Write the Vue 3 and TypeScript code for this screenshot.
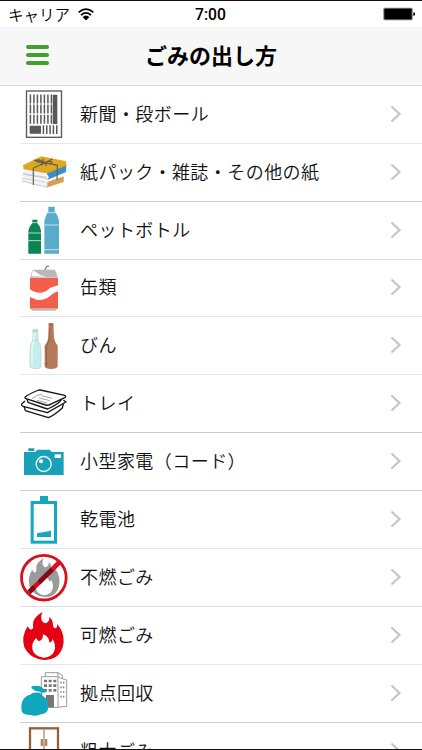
<script setup lang="ts">
interface Item {
  icon: string
  label: string
  tone: 'light' | 'mid' | 'dark'
  top: number
}

const items: Item[] = [
  { icon: 'newspaper', label: '新聞・段ボール', tone: 'light', top: 6 },
  { icon: 'books', label: '紙パック・雑誌・その他の紙', tone: 'dark', top: 180 },
  { icon: 'bottles', label: 'ペットボトル', tone: 'mid', top: 6 },
  { icon: 'can', label: '缶類', tone: 'light', top: 180 },
  { icon: 'glass', label: 'びん', tone: 'light', top: 6 },
  { icon: 'tray', label: 'トレイ', tone: 'dark', top: 180 },
  { icon: 'camera', label: '小型家電（コード）', tone: 'dark', top: 6 },
  { icon: 'battery', label: '乾電池', tone: 'light', top: 180 },
  { icon: 'noburn', label: '不燃ごみ', tone: 'mid', top: 6 },
  { icon: 'burn', label: '可燃ごみ', tone: 'light', top: 180 },
  { icon: 'depot', label: '拠点回収', tone: 'dark', top: 6 },
  { icon: 'wardrobe', label: '粗大ごみ', tone: 'light', top: 180 },
]
</script>

<template>
  <div class="screen">
    <header>
      <div class="status">
        <div class="carrier">
          <span>キャリア</span>
          <svg class="wifi" viewBox="0 0 48 38" width="16" height="12.7">
            <path d="M2 13Q24-6 46 13M9 21Q24 8 39 21" fill="none" stroke="#000" stroke-width="5" />
            <path d="M14 27Q24 18 34 27L24 38Z" />
          </svg>
        </div>
        <span class="time">7:00</span>
        <svg class="power" viewBox="0 0 96 42" width="32" height="14">
          <rect x="1" y="2" width="88" height="38" rx="5" fill="#777" />
          <rect x="4" y="5" width="82" height="32" rx="3" />
          <path d="M91 16Q97 17 97 21Q97 25 91 27Z" />
        </svg>
      </div>
      <div class="nav">
        <button class="menu" aria-label="メニュー"><i></i><i></i><i></i></button>
        <h1>ごみの出し方</h1>
      </div>
    </header>
    <ul>
      <li v-for="item in items" :key="item.icon" :class="item.tone">
        <svg class="icon" :viewBox="`0 ${item.top} 240 174`">
          <g v-if="item.icon === 'newspaper'">
            <rect x="79.500" y="21" width="105" height="139" fill="#fff" stroke="#595757" stroke-width="4" />
            <path d="M89 45H156M89 75H156M89 106H156" stroke="#595757" stroke-width="27" stroke-dasharray="4.500 6" />
            <path d="M128 137H175" stroke="#595757" stroke-width="26" stroke-dasharray="4.500 5.500" />
            <path d="M158 32H172V120H158ZM89 125H123V149H89Z" fill="#595757" />
          </g>
          <g v-else-if="item.icon === 'books'">
            <path d="M137 294L191 277V294L138 311Z" fill="#dc9c51" />
            <path d="M139 288L190 270V277L139 295Z" fill="#fff" />
            <path d="M139 268L199 244L198 264L140 289L147 280Z" fill="#3b8fc9" />
            <path d="M71 254L141 265L142 308L66 292Q62 289 66 282L71 280Q64 276 69 270Z" fill="#f5f3f3" />
            <path d="M70 269L140 280M66 282L139 295" stroke="#acc7df" stroke-width="2" />
            <path d="M68 270L141 283M66 291L138 309" stroke="#b8b0af" stroke-width="2" />
            <path d="M71 254L69 244L124 217L199 232V244L143 267Z" fill="#e0a81e" />
            <path d="M71 254L143 267L199 244" stroke="#c78c1c" stroke-width="2" fill="none" />
            <path d="M100 303V252L158 225M101 228L172 244L171 287M132 236Q114 222 107 231Q112 237 132 236Q151 227 156 235Q149 242 132 236L124 245M132 236L140 246M132 236L128 224" fill="none" stroke="#665f50" stroke-width="3.500" />
          </g>
          <g v-else-if="item.icon === 'bottles'">
            <path d="M97 59H112V69Q122 80 123 93V161H85V93Q87 80 97 69Z" fill="#078553" />
            <path d="M96 68H113M85 99H123M85 122H123" stroke="#d8efe5" stroke-width="2.500" />
            <path d="M145 20H164V35Q176 47 177 66V161H133V66Q135 47 145 35Z" fill="#5aaaca" />
            <path d="M144 38H165M133 75H177M133 149H177" stroke="#d6eef6" stroke-width="2.500" />
          </g>
          <g v-else-if="item.icon === 'can'">
            <path d="M134 211L140 199H147" fill="none" stroke="#888" stroke-width="4" />
            <path d="M98 209H165L174 233H90Z" fill="#b9b9b9" />
            <path d="M99 211L122 226L140 230L94 229Z" fill="#fff" />
            <path d="M90 234H174V326H90Z" fill="#f35d4b" />
            <path d="M90 268Q105 280 125 278Q138 276 151 263L174 256V274Q158 279 149 289Q133 302 112 300L90 291Z" fill="#fff" />
            <path d="M90 326H174L165 332H98Z" fill="#bababa" />
          </g>
          <g v-else-if="item.icon === 'glass'">
            <path d="M99 40H113L114 74Q123 84 123 96V153Q121 158 107 158Q92 158 90 153V96Q91 83 98 75Z" fill="#c4eeec" stroke="#bdd0cd" stroke-width="2" />
            <path d="M98 45H114M98 73H114" stroke="#9fbbb9" stroke-width="2" />
            <path d="M102 52V78Q95 88 96 104V149" fill="none" stroke="#e3fbf9" stroke-width="4" />
            <path d="M146 21H160L162 65Q164 79 173 89V151Q171 159 153 159Q136 159 134 151V89Q143 79 145 65Z" fill="#b47957" />
            <path d="M146 27H160M134 96H143M134 143H143" stroke="#895c43" stroke-width="2" />
            <path d="M149 35L147 72L139 91V153" fill="none" stroke="#986144" stroke-width="3" />
          </g>
          <g v-else-if="item.icon === 'tray'" fill="#fff" stroke="#171717" stroke-width="4" stroke-linejoin="round">
            <path d="M72 270L76 284L145 305Q161 299 187 276L191 259L137 278Z" />
            <path d="M75 255L65 264Q63 270 72 272L142 290L198 258L190 252" />
            <path d="M80 247L84 259L133 276L143 279Q174 265 182 254L188 241Z" />
            <path d="M76 243Q82 236 116 222H121L194 238Q200 241 194 245L151 265Q144 269 137 267L78 248Q73 246 76 243Z" />
            <path d="M96 248L110 239L125 234M123 239L157 247M117 246L150 254M111 253L142 261" fill="none" stroke="#777" stroke-width="2" />
          </g>
          <g v-else-if="item.icon === 'camera'">
            <path d="M85 49H103V57H85ZM72 60H105L113 53H149L156 60H191V129H72Z" fill="#1ba1b7" />
            <circle cx="131" cy="96" r="22.500" fill="none" stroke="#e7fcff" stroke-width="4" />
            <path d="M164 67H183V78H164Z" fill="#fff" /><circle cx="123" cy="88" r="6" fill="#fff" />
          </g>
          <g v-else-if="item.icon === 'battery'">
            <path d="M120 192H144V208H120Z" fill="#13a8bf" />
            <rect x="96.500" y="211.500" width="70" height="119" fill="#fff" stroke="#13a8bf" stroke-width="9" />
            <path d="M111 304L153 296V315H111Z" fill="#13a8bf" />
          </g>
          <g v-else-if="item.icon === 'noburn'">
            <circle cx="131.500" cy="89" r="67" fill="#fff" />
            <g transform="translate(33.500 -125) scale(.76 .81)">
              <path d="M127 192Q120 211 127 220Q136 232 146 219Q150 213 147 207Q158 213 159 229Q158 240 166 241Q173 240 171 228Q191 248 191 282Q188 314 166 328Q145 341 115 333Q87 326 73 298Q63 265 83 235Q89 247 96 244Q101 241 99 230Q96 211 127 192Z" fill="#9a9a9a" />
              <path d="M124 259Q119 277 111 277Q106 276 107 269Q94 282 97 304Q103 326 131 329Q159 328 165 302Q166 286 158 272Q156 280 149 277Q151 265 124 259Z" fill="#fff" />
            </g>
            <path d="M84 136L179 42" stroke="#d7111e" stroke-width="14" />
            <path d="M89 131L103 117M116 104L157 64" stroke="#7d0d16" stroke-width="14" />
            <circle cx="131.500" cy="89" r="67" fill="none" stroke="#d7111e" stroke-width="8.500" />
          </g>
          <g v-else-if="item.icon === 'burn'">
            <path d="M127 192Q120 211 127 220Q136 232 146 219Q150 213 147 207Q158 213 159 229Q158 240 166 241Q173 240 171 228Q191 248 191 282Q188 314 166 328Q145 341 115 333Q87 326 73 298Q63 265 83 235Q89 247 96 244Q101 241 99 230Q96 211 127 192Z" fill="#e60013" />
            <path d="M129 259Q129 277 118 279Q110 278 110 269Q94 282 97 304Q103 326 131 329Q159 328 165 302Q166 286 158 272Q156 284 148 283Q147 265 129 259Z" fill="#fff" />
          </g>
          <g v-else-if="item.icon === 'depot'">
            <path d="M124 38H136V26H174L187 34V44L200 48V127L174 130H124Z" fill="#fff" stroke="#858585" stroke-width="2.500" />
            <path d="M174 40V130M136 38H174L187 44M174 26V38" fill="none" stroke="#858585" stroke-width="2.500" />
            <path d="M132 51H169M132 65H169M132 79H169" stroke="#777" stroke-width="8" stroke-dasharray="9 5" />
            <path d="M181 56H193M181 70H193M181 84H193M181 98H193" stroke="#777" stroke-width="5" stroke-dasharray="4 4" />
            <path d="M138 93H162V130H138Z" fill="#777" />
            <path d="M94 72Q94 64 107 66Q119 63 131 74L138 85L122 87L119 83Q104 83 94 72Z" fill="#11a6be" />
            <path d="M97 88Q107 82 123 88Q126 96 136 101Q147 115 144 136Q140 150 124 151Q107 158 91 153Q72 153 66 144Q60 122 71 104Q81 94 93 91Z" fill="#11a6be" />
            <path d="M102 85Q112 80 123 87" fill="none" stroke="#fff" stroke-width="2.500" />
          </g>
          <g v-else>
            <rect x="90" y="196" width="84" height="132" fill="#fff" stroke="#956137" stroke-width="7" />
            <path d="M132 200V325" stroke="#956137" stroke-width="3" />
            <path d="M122 228H129V249H122ZM135 228H142V249H135Z" fill="#b58560" />
          </g>
        </svg>
        <span class="label">{{ item.label }}</span>
        <svg class="chevron" viewBox="0 0 12 18" width="12" height="18">
          <path d="M1.500 1.500L9.500 9L1.500 16.500" fill="none" stroke="#c5c5c9" stroke-width="2.200" />
        </svg>
      </li>
    </ul>
  </div>
</template>

<style>
body {
  margin: 0;
  background: #fff;
}
</style>

<style scoped>
.screen {
  box-sizing: border-box;
  width: 422px;
  height: 750px;
  display: flex;
  flex-direction: column;
  overflow: hidden;
  border-top: 1px solid #111;
  border-bottom: 1px solid #111;
  background: #fff;
  color: #111;
  font-family: "Noto Sans CJK JP", sans-serif;
}

header {
  flex: none;
  box-sizing: border-box;
  height: 85px;
  border-bottom: 1px solid #d9d9d9;
  background: #f7f7f7;
}

.status {
  display: grid;
  grid-template-columns: 1fr auto 1fr;
  align-items: center;
  box-sizing: border-box;
  height: 26px;
  padding: 0 7px 0 8px;
  background: #fff;
  color: #000;
}

.carrier {
  display: flex;
  align-items: center;
  gap: 8px;
  font-size: 15.500px;
  font-weight: 350;
  line-height: 24px;
}

.time {
  padding: 1px 2px 0 0;
  font: 500 15.700px/25px Roboto, sans-serif;
}

.power {
  justify-self: end;
}

.nav {
  display: grid;
  grid-template-columns: 52px 1fr 52px;
  align-items: center;
  height: 57px;
}

.menu {
  display: flex;
  flex-direction: column;
  gap: 4px;
  width: 23px;
  margin: -2px 0 0 26px;
  padding: 0;
  border: 0;
  background: none;
}

.menu i {
  height: 4px;
  border-radius: 2px;
  background: #43a02c;
}

h1 {
  margin: 0;
  padding-bottom: 3px;
  color: #000;
  font-size: 22px;
  font-weight: 700;
  line-height: 32px;
  text-align: center;
}

ul {
  margin: -0.300px 0 0;
  padding: 0;
  list-style: none;
}

li {
  display: flex;
  align-items: center;
  height: 57.940px;
  background: linear-gradient(var(--line), var(--line)) 20px 100% / 402px 1px no-repeat;
}

.light {
  --line: #e6e6e6;
}

.mid {
  --line: #dddddd;
}

.dark {
  --line: #cccccc;
}

.icon {
  flex: none;
  width: 80px;
  height: 58px;
  margin-top: 1px;
}

.label {
  flex: 1;
  padding-bottom: 4px;
  font-size: 18px;
  font-weight: 350;
  letter-spacing: 0.450px;
  line-height: 26px;
  white-space: nowrap;
}

.chevron {
  flex: none;
  margin: 0 20px 2px 0;
}
</style>
